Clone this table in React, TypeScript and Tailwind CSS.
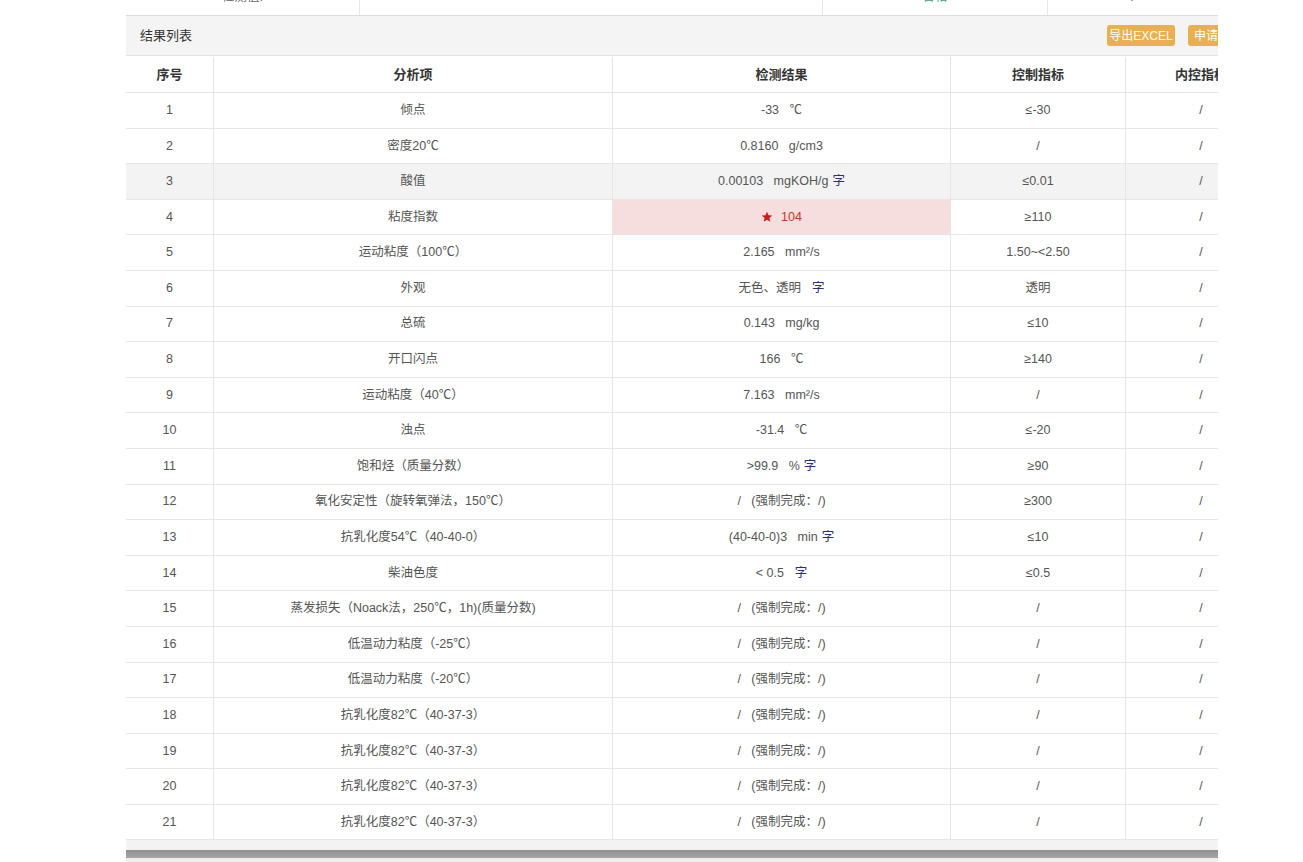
import React from 'react';

type Row = {
  name: string;
  result: React.ReactNode;
  control: string;
  inner: string;
  hover?: boolean;
  alert?: boolean;
};

const Zi = () => <span className="text-[#2f2f7a] ml-1">字</span>;

const forced = <span>/&nbsp;&nbsp;&nbsp;(强制完成：/)</span>;

const rows: Row[] = [
  { name: '倾点', result: <span>-33&nbsp;&nbsp;&nbsp;℃</span>, control: '≤-30', inner: '/' },
  { name: '密度20℃', result: <span>0.8160&nbsp;&nbsp;&nbsp;g/cm3</span>, control: '/', inner: '/' },
  { name: '酸值', result: <span>0.00103&nbsp;&nbsp;&nbsp;mgKOH/g<Zi /></span>, control: '≤0.01', inner: '/', hover: true },
  { name: '粘度指数', result: <span>104</span>, control: '≥110', inner: '/', alert: true },
  { name: '运动粘度（100℃）', result: <span>2.165&nbsp;&nbsp;&nbsp;mm²/s</span>, control: '1.50~<2.50', inner: '/' },
  { name: '外观', result: <span>无色、透明&nbsp;&nbsp;<Zi /></span>, control: '透明', inner: '/' },
  { name: '总硫', result: <span>0.143&nbsp;&nbsp;&nbsp;mg/kg</span>, control: '≤10', inner: '/' },
  { name: '开口闪点', result: <span>166&nbsp;&nbsp;&nbsp;℃</span>, control: '≥140', inner: '/' },
  { name: '运动粘度（40℃）', result: <span>7.163&nbsp;&nbsp;&nbsp;mm²/s</span>, control: '/', inner: '/' },
  { name: '浊点', result: <span>-31.4&nbsp;&nbsp;&nbsp;℃</span>, control: '≤-20', inner: '/' },
  { name: '饱和烃（质量分数）', result: <span>&gt;99.9&nbsp;&nbsp;&nbsp;%<Zi /></span>, control: '≥90', inner: '/' },
  { name: '氧化安定性（旋转氧弹法，150℃）', result: forced, control: '≥300', inner: '/' },
  { name: '抗乳化度54℃（40-40-0）', result: <span>(40-40-0)3&nbsp;&nbsp;&nbsp;min<Zi /></span>, control: '≤10', inner: '/' },
  { name: '柴油色度', result: <span>&lt; 0.5&nbsp;&nbsp;<Zi /></span>, control: '≤0.5', inner: '/' },
  { name: '蒸发损失（Noack法，250℃，1h)(质量分数)', result: forced, control: '/', inner: '/' },
  { name: '低温动力粘度（-25℃）', result: forced, control: '/', inner: '/' },
  { name: '低温动力粘度（-20℃）', result: forced, control: '/', inner: '/' },
  { name: '抗乳化度82℃（40-37-3）', result: forced, control: '/', inner: '/' },
  { name: '抗乳化度82℃（40-37-3）', result: forced, control: '/', inner: '/' },
  { name: '抗乳化度82℃（40-37-3）', result: forced, control: '/', inner: '/' },
  { name: '抗乳化度82℃（40-37-3）', result: forced, control: '/', inner: '/' },
];

const Star = () => (
  <svg width="12" height="12" viewBox="0 0 24 24" className="mr-2 inline-block" fill="#d11a1a">
    <path d="M12 1.5l3.1 6.9 7.4.7-5.6 5 1.7 7.4L12 17.7l-6.6 3.8 1.7-7.4-5.6-5 7.4-.7z" />
  </svg>
);

export default function App() {
  return (
    <div
      className="w-[1303px] h-[862px] bg-white overflow-hidden text-[12.5px] text-[#555]"
      style={{ fontFamily: '"Liberation Sans", "Noto Sans CJK SC", sans-serif' }}
    >
      <div className="ml-[126px] w-[1092px] overflow-hidden">
        {/* partial row above, scrolled mostly out of view */}
        <div className="h-[16px] overflow-hidden border-b border-[#dcdcdc] flex">
          <div className="w-[234px] border-r border-[#e8e8e8] -mt-[12px] pl-[96px] text-[#666]">检测值:</div>
          <div className="w-[463px] border-r border-[#e8e8e8]" />
          <div className="w-[225px] border-r border-[#e8e8e8] -mt-[12px] text-center text-[#3a9a8a]">合格</div>
          <div className="flex-1 -mt-[12px] text-center">/</div>
        </div>

        {/* panel header */}
        <div className="h-[40px] bg-[#f4f4f4] border-b border-[#e2e2e2] flex items-center justify-between pl-[14px]">
          <span className="text-[13px] text-[#333]">结果列表</span>
          <div className="flex gap-[13px] -mr-[40px]">
            <button className="h-[21px] w-[68px] rounded-[3px] bg-[#e8b04f] text-white text-[12px] leading-none">导出EXCEL</button>
            <button className="h-[21px] w-[70px] rounded-[3px] bg-[#e8b04f] text-white text-[12px] leading-none text-left pl-[6px]">申请复检</button>
          </div>
        </div>

        {/* table */}
        <div className="w-[1240px]">
          <div className="flex h-[37px] pt-[1px] font-bold text-[13px] text-[#333] border-b border-[#e4e4e4]">
            <div className="w-[88px] flex items-center justify-center border-r border-[#e4e4e4]">序号</div>
            <div className="w-[399px] flex items-center justify-center border-r border-[#e4e4e4]">分析项</div>
            <div className="w-[338px] flex items-center justify-center border-r border-[#e4e4e4]">检测结果</div>
            <div className="w-[175px] flex items-center justify-center border-r border-[#e4e4e4]">控制指标</div>
            <div className="w-[150px] flex items-center justify-center">内控指标</div>
          </div>
          {rows.map((r, i) => (
            <div
              key={i}
              className={`flex h-[35.6px] border-b border-[#e6e6e6] ${r.hover ? 'bg-[#f3f3f3]' : 'bg-white'}`}
            >
              <div className="w-[88px] flex items-center justify-center border-r border-[#e6e6e6]">{i + 1}</div>
              <div className="w-[399px] flex items-center justify-center border-r border-[#e6e6e6]">{r.name}</div>
              <div
                className={`w-[338px] flex items-center justify-center border-r border-[#e6e6e6] ${
                  r.alert ? 'bg-[#f7dede] text-[#c0392b]' : ''
                }`}
              >
                {r.alert && <Star />}
                {r.result}
              </div>
              <div className="w-[175px] flex items-center justify-center border-r border-[#e6e6e6]">{r.control}</div>
              <div className="w-[150px] flex items-center justify-center">{r.inner}</div>
            </div>
          ))}
        </div>

        {/* horizontal scrollbar */}
        <div className="h-[10px] bg-[#f3f3f3]" />
        <div className="h-[8px] bg-gradient-to-b from-[#8f8f8f] to-[#a6a6a6]" />
        <div className="h-[4px] bg-[#ededed]" />
      </div>
    </div>
  );
}
